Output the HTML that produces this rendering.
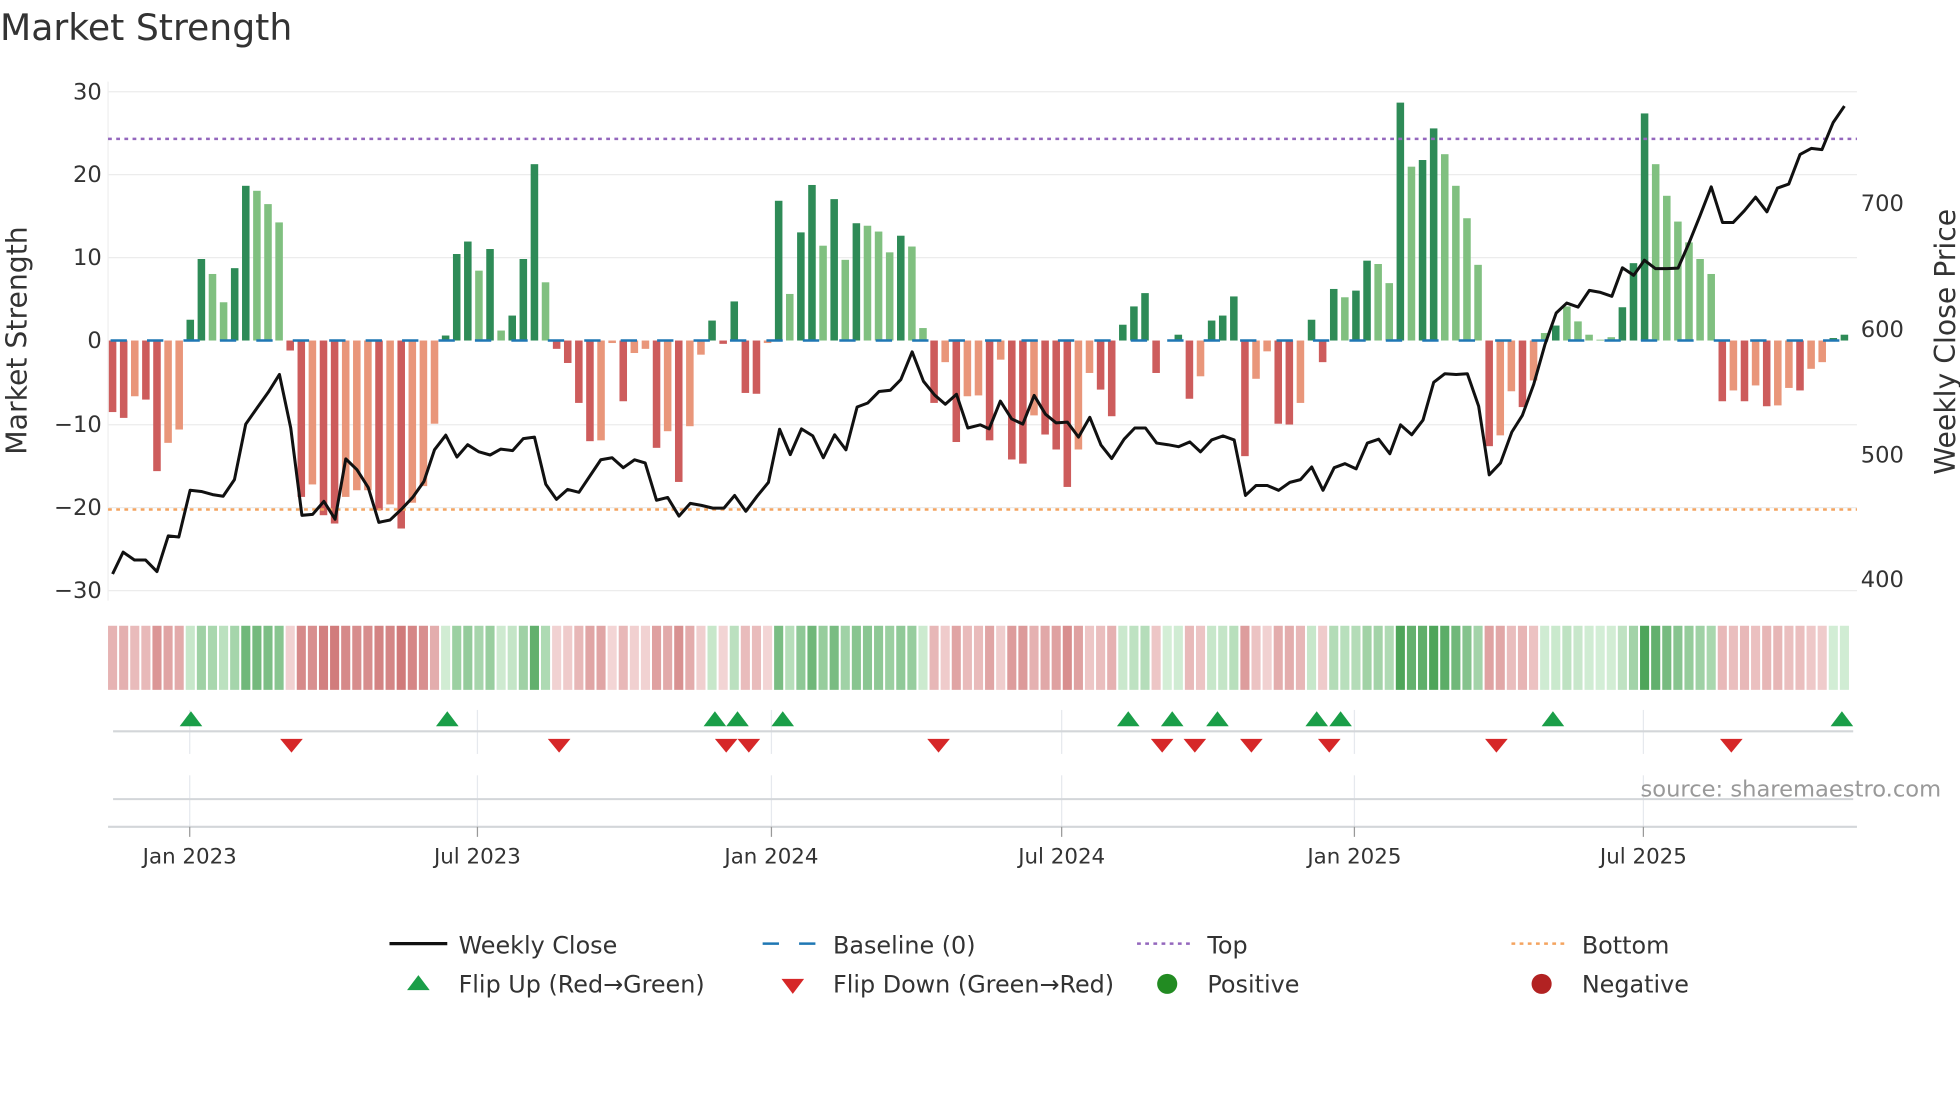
<!DOCTYPE html>
<html><head><meta charset="utf-8"><style>
html,body{margin:0;padding:0;background:#fff;width:1960px;height:1102px;overflow:hidden}
svg{display:block}
text{font-family:"DejaVu Sans","Liberation Sans",sans-serif;fill:#333}
</style></head><body>
<svg id="s" width="1960" height="1102" viewBox="0 0 1560 877" preserveAspectRatio="none" xmlns="http://www.w3.org/2000/svg">
<rect width="1560" height="877" fill="#fff"/>
<text x="0" y="32" font-size="28.8">Market Strength</text>
<g stroke="#ececec" stroke-width="1">
<line x1="86" x2="1478" y1="73" y2="73"/><line x1="86" x2="1478" y1="139" y2="139"/><line x1="86" x2="1478" y1="205" y2="205"/><line x1="86" x2="1478" y1="338" y2="338"/><line x1="86" x2="1478" y1="404" y2="404"/><line x1="86" x2="1478" y1="470" y2="470"/>
</g>
<line x1="86" x2="86" y1="65" y2="478" stroke="#eee"/>
<g font-size="18" text-anchor="end">
<text x="81" y="79">30</text><text x="81" y="145">20</text><text x="81" y="211">10</text><text x="81" y="277">0</text><text x="81" y="344">−10</text><text x="81" y="410">−20</text><text x="81" y="476">−30</text>
</g>
<g font-size="18">
<text x="1481" y="168">700</text><text x="1481" y="268">600</text><text x="1481" y="368">500</text><text x="1481" y="467">400</text>
</g>
<text transform="translate(21,271) rotate(-90)" font-size="22.5" text-anchor="middle">Market Strength</text>
<text transform="translate(1556,272) rotate(-90)" font-size="22.5" text-anchor="middle">Weekly Close Price</text>
<g id="bars"></g>
<line x1="86" x2="1478" y1="110.5" y2="110.5" stroke="#9467bd" stroke-width="2" stroke-dasharray="3,3.5"/>
<line x1="86" x2="1478" y1="405.5" y2="405.5" stroke="#f4a460" stroke-width="2" stroke-dasharray="3,3.5"/>
<line x1="88" x2="1478" y1="271" y2="271" stroke="#1f77b4" stroke-width="2" stroke-dasharray="13,16"/>
<polyline id="price" fill="none" stroke="#111" stroke-width="2.4" stroke-linejoin="round"/>
<g id="heat"></g>
<g stroke="#e6e9ee" stroke-width="1">
<line x1="151" x2="151" y1="565" y2="600"/><line x1="380" x2="380" y1="565" y2="600"/><line x1="614" x2="614" y1="565" y2="600"/><line x1="845" x2="845" y1="565" y2="600"/><line x1="1078" x2="1078" y1="565" y2="600"/><line x1="1308" x2="1308" y1="565" y2="600"/>
<line x1="151" x2="151" y1="617" y2="658"/><line x1="380" x2="380" y1="617" y2="658"/><line x1="614" x2="614" y1="617" y2="658"/><line x1="845" x2="845" y1="617" y2="658"/><line x1="1078" x2="1078" y1="617" y2="658"/><line x1="1308" x2="1308" y1="617" y2="658"/>
</g>
<line x1="90" x2="1475" y1="582" y2="582" stroke="#d3d6d9" stroke-width="1.6"/>
<line x1="90" x2="1475" y1="636" y2="636" stroke="#d3d6d9" stroke-width="1.6"/>
<line x1="86" x2="1478" y1="658" y2="658" stroke="#d3d6d9" stroke-width="1.6"/>
<g stroke="#999" stroke-width="1">
<line x1="151" x2="151" y1="658" y2="666"/><line x1="380" x2="380" y1="658" y2="666"/><line x1="614" x2="614" y1="658" y2="666"/><line x1="845" x2="845" y1="658" y2="666"/><line x1="1078" x2="1078" y1="658" y2="666"/><line x1="1308" x2="1308" y1="658" y2="666"/>
</g>
<g id="tri"></g>
<g font-size="17" text-anchor="middle">
<text x="151" y="687">Jan 2023</text><text x="380" y="687">Jul 2023</text><text x="614" y="687">Jan 2024</text><text x="845" y="687">Jul 2024</text><text x="1078" y="687">Jan 2025</text><text x="1308" y="687">Jul 2025</text>
</g>
<text x="1545" y="634" font-size="18" text-anchor="end" style="fill:#999">source: sharemaestro.com</text>
<g font-size="19">
<line x1="310" x2="356" y1="751" y2="751" stroke="#111" stroke-width="2.6"/>
<text x="365" y="759">Weekly Close</text>
<line x1="607" x2="652" y1="751" y2="751" stroke="#1f77b4" stroke-width="2" stroke-dasharray="13,16"/>
<text x="663" y="759">Baseline (0)</text>
<line x1="905" x2="950" y1="751" y2="751" stroke="#9467bd" stroke-width="2" stroke-dasharray="3,3.5"/>
<text x="961" y="759">Top</text>
<line x1="1203" x2="1248" y1="751" y2="751" stroke="#f4a460" stroke-width="2" stroke-dasharray="3,3.5"/>
<text x="1259" y="759">Bottom</text>
<polygon points="324,788 342,788 333,776" fill="#1a9e48"/>
<text x="365" y="790">Flip Up (Red→Green)</text>
<polygon points="622,779 640,779 631,791" fill="#d62728"/>
<text x="663" y="790">Flip Down (Green→Red)</text>
<circle cx="929" cy="783" r="8" fill="#228b22"/>
<text x="961" y="790">Positive</text>
<circle cx="1227" cy="783" r="8" fill="#b22222"/>
<text x="1259" y="790">Negative</text>
</g>
</svg>
<script>
var V=[[-8.6,'R'],[-9.3,'R'],[-6.7,'L'],[-7.1,'R'],[-15.7,'R'],[-12.3,'L'],[-10.7,'L'],[2.5,'G'],[9.8,'G'],[8,'g'],[4.6,'g'],[8.7,'G'],[18.6,'G'],[18,'g'],[16.4,'g'],[14.2,'g'],[-1.2,'R'],[-18.8,'R'],[-17.3,'L'],[-21,'R'],[-22,'R'],[-18.8,'L'],[-18,'L'],[-18,'L'],[-20.4,'R'],[-19.7,'L'],[-22.6,'R'],[-19.5,'L'],[-17.5,'L'],[-10,'L'],
[0.6,'G'],[10.4,'G'],[11.9,'G'],[8.4,'g'],[11,'G'],[1.2,'g'],[3,'G'],[9.8,'G'],[21.2,'G'],[7,'g'],[-1,'R'],[-2.7,'R'],[-7.5,'R'],[-12.1,'R'],[-12,'L'],[-0.3,'L'],[-7.3,'R'],[-1.5,'L'],[-1,'L'],[-12.9,'R'],[-10.9,'L'],[-17,'R'],[-10.3,'L'],[-1.7,'L'],[2.4,'G'],[-0.4,'R'],[4.7,'G'],[-6.3,'R'],[-6.4,'R'],[-0.3,'L'],
[16.8,'G'],[5.6,'g'],[13,'G'],[18.7,'G'],[11.4,'g'],[17,'G'],[9.7,'g'],[14.1,'G'],[13.8,'g'],[13.1,'g'],[10.6,'g'],[12.6,'G'],[11.3,'g'],[1.5,'g'],[-7.5,'R'],[-2.6,'L'],[-12.2,'R'],[-6.7,'L'],[-6.6,'L'],
[-12,'R'],[-2.3,'L'],[-14.3,'R'],[-14.8,'R'],[-9,'L'],[-11.3,'R'],[-13.1,'R'],[-17.6,'R'],[-13.1,'L'],[-3.9,'L'],[-5.9,'R'],[-9.1,'R'],[1.9,'G'],[4.1,'G'],[5.7,'G'],[-3.9,'R'],[0,'G'],[0.7,'G'],[-7,'R'],[-4.3,'L'],[2.4,'G'],[3,'G'],[5.3,'G'],[-13.9,'R'],[-4.6,'L'],[-1.3,'L'],[-10,'R'],[-10.1,'R'],[-7.5,'L'],[2.5,'G'],[-2.6,'R'],[6.2,'G'],[5.2,'g'],[6,'G'],[9.6,'G'],[9.2,'g'],[6.9,'g'],[28.6,'G'],[20.9,'g'],[21.7,'G'],[25.5,'G'],[22.4,'g'],[18.6,'g'],[14.7,'g'],[9.1,'g'],[-12.7,'R'],[-11.4,'L'],[-6.1,'L'],[-8,'R'],[-4.8,'L'],[0.9,'g'],[1.8,'G'],[4.1,'g'],[2.3,'g'],[0.7,'g'],[0.1,'g'],[0.4,'g'],[4,'G'],[9.3,'G'],[27.3,'G'],[21.2,'g'],[17.4,'g'],[14.3,'g'],[11.8,'g'],[9.8,'g'],[8,'g'],[-7.3,'R'],[-6,'L'],[-7.3,'R'],[-5.4,'L'],[-7.9,'R'],[-7.8,'L'],[-5.7,'L'],[-6,'R'],[-3.4,'L'],[-2.6,'L'],[0.3,'G'],[0.7,'G']];
var C={G:'#2e8b57',g:'#80c080',R:'#cd5c5c',L:'#e9967a'};
var N=V.length,x0=89.6,dx=(1468-89.6)/(N-1),ns='http://www.w3.org/2000/svg';
function el(g,t,a){var e=document.createElementNS(ns,t);for(var k in a)e.setAttribute(k,a[k]);document.getElementById(g).appendChild(e);}
function mix(a,b,t){var r=[];for(var i=0;i<3;i++)r.push(Math.round(a[i]+(b[i]-a[i])*t));return 'rgb('+r.join(',')+')';}
for(var i=0;i<N;i++){var v=V[i][0],x=x0+i*dx,y0=271,h=Math.abs(v)*6.62;
 if(h>0.3)el('bars','rect',{x:x-3,y:v>0?y0-h:y0,width:6,height:h,fill:C[V[i][1]]});
 var t=Math.min(Math.abs(v)/25,1);
 var col=v>=0?mix([212,238,214],[78,165,90],t):mix([243,214,214],[204,112,112],t);
 el('heat','rect',{x:x-dx/2+0.8,y:498,width:dx-1.6,height:51,fill:col});}
var P1=[[180,1448],[197,1393],[215,1413],[233,1413],[251,1442],[269,1352],[286,1355],[304,1237],[322,1240],[340,1248],[357,1252],[375,1210],[393,1070],[411,1030],[429,990],[447,945],[465,1080],[483,1300],[500,1298],[518,1265],[536,1310],[553,1158],[571,1185],[589,1230],[606,1318],[624,1312],[642,1285],[660,1255],[678,1215],[695,1135],[713,1098],[731,1153],[748,1122],[766,1140],[784,1148],[801,1133],[820,1137],[837,1107],[855,1103],[873,1222],[890,1260],[908,1235],[926,1242],[944,1200],[961,1160],[979,1155],[997,1180],[1015,1160],[1032,1168],[1050,1262],[1068,1255],[1086,1302],[1104,1270],[1122,1275],[1140,1282],[1158,1282],[1175,1250],[1193,1290],[1211,1252],[1229,1217],[1247,1083],[1264,1147],[1282,1082],[1300,1100],[1317,1155],[1335,1097],[1353,1135],[1371,1027],[1388,1017],[1406,988],[1424,985],[1441,958],[1459,888],[1477,962],[1495,997],[1512,1020],[1530,995],[1548,1080]];
var P2=[[0,1072],[14,1082],[32,1012],[50,1057],[68,1070],[86,998],[104,1045],[121,1067],[139,1065],[157,1103],[175,1053],[193,1123],[210,1157],[230,1108],[247,1080],[264,1080],[282,1118],[300,1122],[317,1127],[335,1115],[352,1140],[370,1110],[388,1100],[406,1110],[424,1250],[441,1225],[459,1225],[477,1237],[495,1217],[512,1210],[530,1178],[548,1237],[566,1180],[583,1170],[601,1183],[619,1118],[637,1108],[655,1145],[672,1072],[690,1097],[708,1060],[725,965],[743,943],[761,945],[779,943],[797,1025],[814,1198],[832,1168],[850,1090],[867,1048],[885,970],[903,870],[921,790],[938,765],[956,775],[974,733],[992,738],[1010,748],[1027,676],[1045,695],[1062,657],[1080,678],[1098,678],[1116,677],[1133,615],[1151,545],[1169,472],[1187,562],[1204,562],[1222,532],[1240,498],[1258,535],[1275,475],[1293,465],[1311,390],[1329,375],[1346,378],[1364,310],[1382,268]];
var pts=[];function Y(o){return (0.3156*(o-232)+73).toFixed(1);}
P1.forEach(function(p){pts.push((p[0]*0.4976).toFixed(1)+','+Y(p[1]));});
P2.forEach(function(p){pts.push((780.3+p[0]*0.4976).toFixed(1)+','+Y(p[1]));});
document.getElementById('price').setAttribute('points',pts.join(' '));
[152,356,569,587,623,898,933,969,1048,1067,1236,1466].forEach(function(x){el('tri','polygon',{points:(x-9)+',578 '+(x+9)+',578 '+x+',566',fill:'#1a9e48'});});
[232,445,578,596,747,925,951,996,1058,1191,1378].forEach(function(x){el('tri','polygon',{points:(x-9)+',588 '+(x+9)+',588 '+x+',599',fill:'#d62728'});});
</script>
</body></html>
